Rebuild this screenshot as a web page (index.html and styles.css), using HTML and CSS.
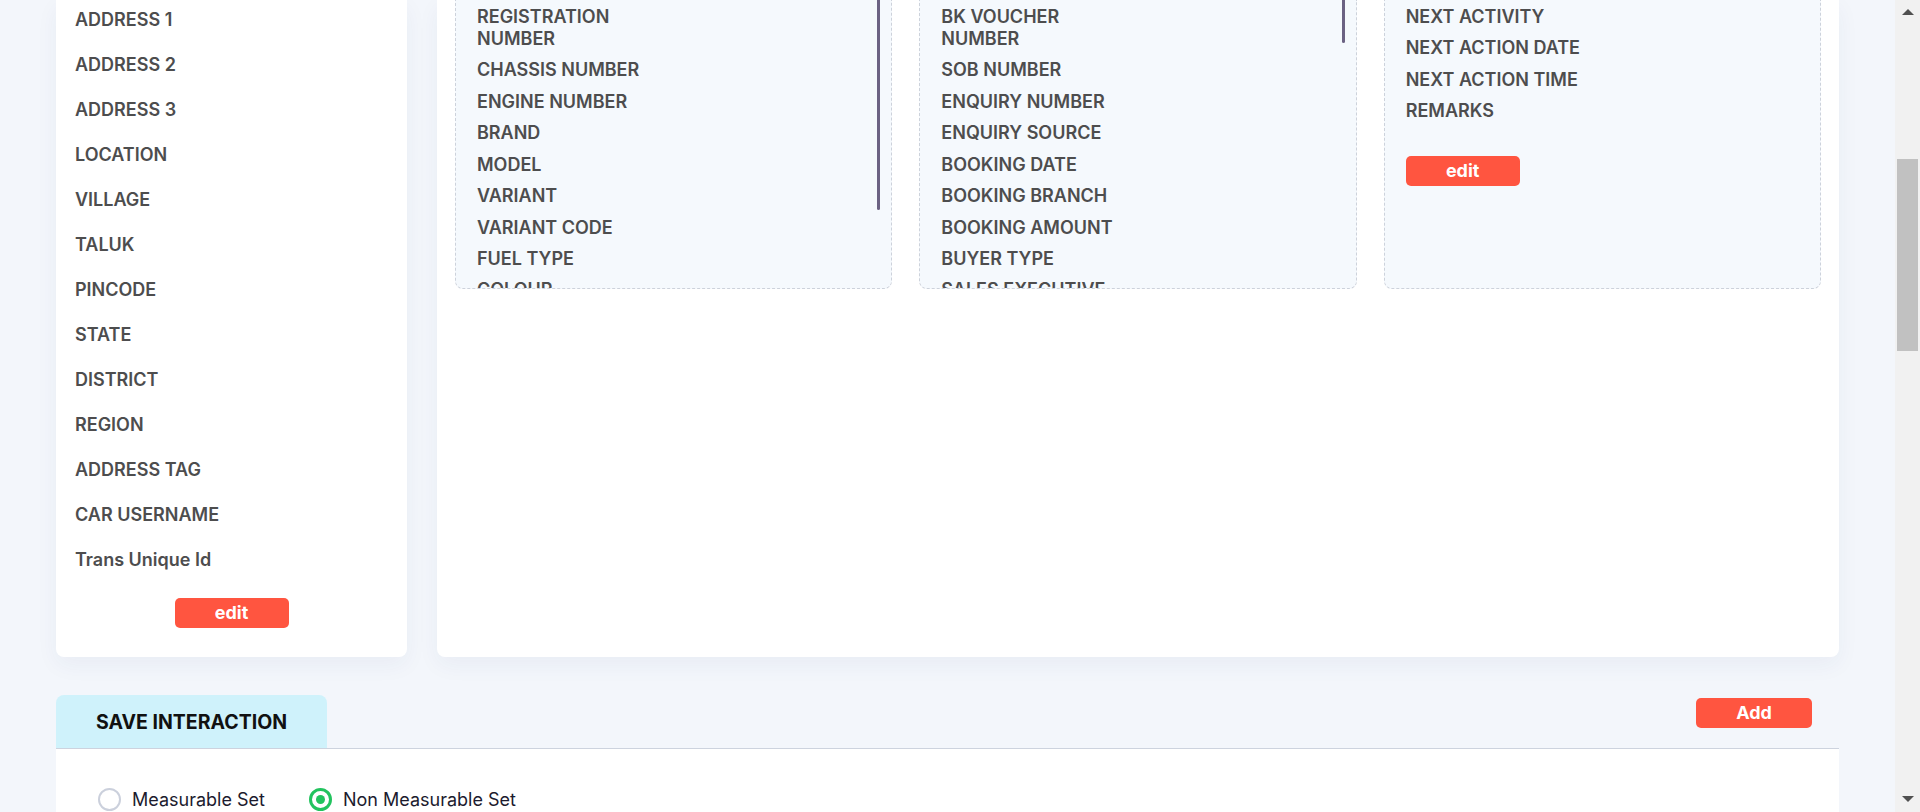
FILE: index.html
```html
<!DOCTYPE html>
<html lang="en">
<head>
<meta charset="utf-8">
<title>Customer Details</title>
<link rel="stylesheet" href="styles.css">
</head>
<body>
<div class="viewport">
  <div class="top-row">
    <section class="card address-card">
      <ul class="addr-list">
        <li>ADDRESS 1</li>
        <li>ADDRESS 2</li>
        <li>ADDRESS 3</li>
        <li>LOCATION</li>
        <li>VILLAGE</li>
        <li>TALUK</li>
        <li>PINCODE</li>
        <li>STATE</li>
        <li>DISTRICT</li>
        <li>REGION</li>
        <li>ADDRESS TAG</li>
        <li>CAR USERNAME</li>
        <li>Trans Unique Id</li>
      </ul>
      <div class="btn-row"><button class="btn">edit</button></div>
    </section>
    <section class="card detail-card">
      <div class="box">
        <ul class="field-list">
          <li>REGISTRATION NUMBER</li>
          <li>CHASSIS NUMBER</li>
          <li>ENGINE NUMBER</li>
          <li>BRAND</li>
          <li>MODEL</li>
          <li>VARIANT</li>
          <li>VARIANT CODE</li>
          <li>FUEL TYPE</li>
          <li>COLOUR</li>
        </ul>
        <div class="track"><div class="thumb" style="height:210px"></div></div>
      </div>
      <div class="box">
        <ul class="field-list">
          <li>BK VOUCHER NUMBER</li>
          <li>SOB NUMBER</li>
          <li>ENQUIRY NUMBER</li>
          <li>ENQUIRY SOURCE</li>
          <li>BOOKING DATE</li>
          <li>BOOKING BRANCH</li>
          <li>BOOKING AMOUNT</li>
          <li>BUYER TYPE</li>
          <li>SALES EXECUTIVE</li>
        </ul>
        <div class="track"><div class="thumb" style="height:43px"></div></div>
      </div>
      <div class="box">
        <ul class="field-list">
          <li>NEXT ACTIVITY</li>
          <li>NEXT ACTION DATE</li>
          <li>NEXT ACTION TIME</li>
          <li>REMARKS</li>
        </ul>
        <div class="box-btn"><button class="btn">edit</button></div>
      </div>
    </section>
  </div>

  <section class="interaction">
    <div class="int-head">
      <div class="tab">SAVE INTERACTION</div>
      <button class="btn btn-add">Add</button>
    </div>
    <div class="int-body">
      <label class="radio"><span class="dot"></span>Measurable Set</label>
      <label class="radio checked"><span class="dot"></span>Non Measurable Set</label>
    </div>
  </section>
</div>
<div class="scrollbar">
  <div class="arrow up"></div>
  <div class="sb-track"><div class="sb-thumb"></div></div>
  <div class="arrow down"></div>
</div>
</body>
</html>
```
FILE: styles.css
```css
* { box-sizing: border-box; }
html, body { margin: 0; padding: 0; }
body {
  width: 1920px;
  height: 812px;
  overflow: hidden;
  display: flex;
  background: #f3f6fb;
  font-family: Inter, "Noto Sans", sans-serif;
  color: #4d4d4e;
}
ul { list-style: none; margin: 0; padding: 0; }
button { font-family: inherit; border: 0; cursor: pointer; }

.viewport {
  flex: 1;
  min-width: 0;
  padding: 0 56px;
  overflow: hidden;
}

.top-row {
  display: flex;
  gap: 30px;
  height: 657px;
}
.card {
  background: #fff;
  border-radius: 0 0 8px 8px;
  box-shadow: 0 8px 22px rgba(40, 60, 110, 0.05);
}
.address-card {
  width: 351px;
  flex: none;
  padding: 9px 0 0 19px;
  display: flex;
  flex-direction: column;
}
.addr-list li {
  font-size: 18px;
  font-weight: 600;
  line-height: 22px;
  margin-bottom: 23px;
}
.addr-list li:last-child { margin-bottom: 0; }
.btn-row {
  display: flex;
  justify-content: center;
  padding-right: 19px;
  margin-top: 27px;
}
.btn {
  width: 114px;
  height: 30px;
  border-radius: 5px;
  background: #ff5540;
  color: #fff;
  font-size: 18px;
  font-weight: 700;
  line-height: 30px;
  padding: 0;
}

.detail-card {
  flex: 1;
  display: grid;
  grid-template-columns: repeat(3, 1fr);
  gap: 27px;
  padding: 0 18px;
  align-items: start;
}
.box {
  height: 289px;
  background: #f5f9fd;
  border: 1px dashed #cdd2db;
  border-top: 0;
  border-radius: 0 0 8px 8px;
  overflow: hidden;
  display: flex;
  padding: 6px 0 0 21px;
}
.field-list {
  flex: 1;
}
.field-list li {
  width: 184px;
  font-size: 18px;
  font-weight: 600;
  line-height: 21.6px;
  margin-bottom: 9.9px;
}
.track {
  width: 3px;
  margin-right: 11px;
  margin-top: -6px;
}
.thumb {
  width: 3px;
  background: #6b6283;
  border-radius: 0 0 2px 2px;
}
.box:nth-child(3) { flex-direction: column; }
.box:nth-child(3) .field-list { flex: none; }
.box-btn { margin-top: 24px; }

.interaction { margin-top: 38px; }
.int-head {
  display: flex;
  justify-content: space-between;
  align-items: flex-start;
  border-bottom: 1px solid #cdd3de;
  padding-right: 27px;
}
.tab {
  width: 271px;
  height: 53px;
  background: #cff2fb;
  border-radius: 8px 8px 0 0;
  padding-left: 40px;
  display: flex;
  align-items: center;
  font-size: 19.5px;
  font-weight: 700;
  color: #111;
}
.btn-add { width: 116px; margin-top: 3px; }
.int-body {
  background: #fff;
  height: 120px;
  padding: 38px 0 0 42px;
  display: flex;
  gap: 44px;
}
.radio {
  display: flex;
  align-items: center;
  gap: 11px;
  height: 24px;
  font-size: 18px;
  color: #1c1b2e;
}
.dot {
  width: 23px;
  height: 23px;
  border-radius: 50%;
  border: 2px solid #cbd0dc;
  background: #fff;
  display: flex;
  align-items: center;
  justify-content: center;
}
.radio.checked .dot { border: 3px solid #22c35e; }
.radio.checked .dot::after {
  content: "";
  width: 9px;
  height: 9px;
  border-radius: 50%;
  background: #22c35e;
}

.scrollbar {
  width: 25px;
  flex: none;
  background: #f1f1f1;
  display: flex;
  flex-direction: column;
  align-items: center;
}
.arrow { width: 0; height: 0; border-left: 6px solid transparent; border-right: 6px solid transparent; }
.arrow.up { border-bottom: 6px solid #505050; margin-top: 9px; }
.arrow.down { border-top: 6px solid #505050; margin-bottom: 10px; }
.sb-track { flex: 1; width: 100%; padding: 0 2px; }
.sb-thumb { height: 192px; margin-top: 144px; background: #c1c1c1; }
```
